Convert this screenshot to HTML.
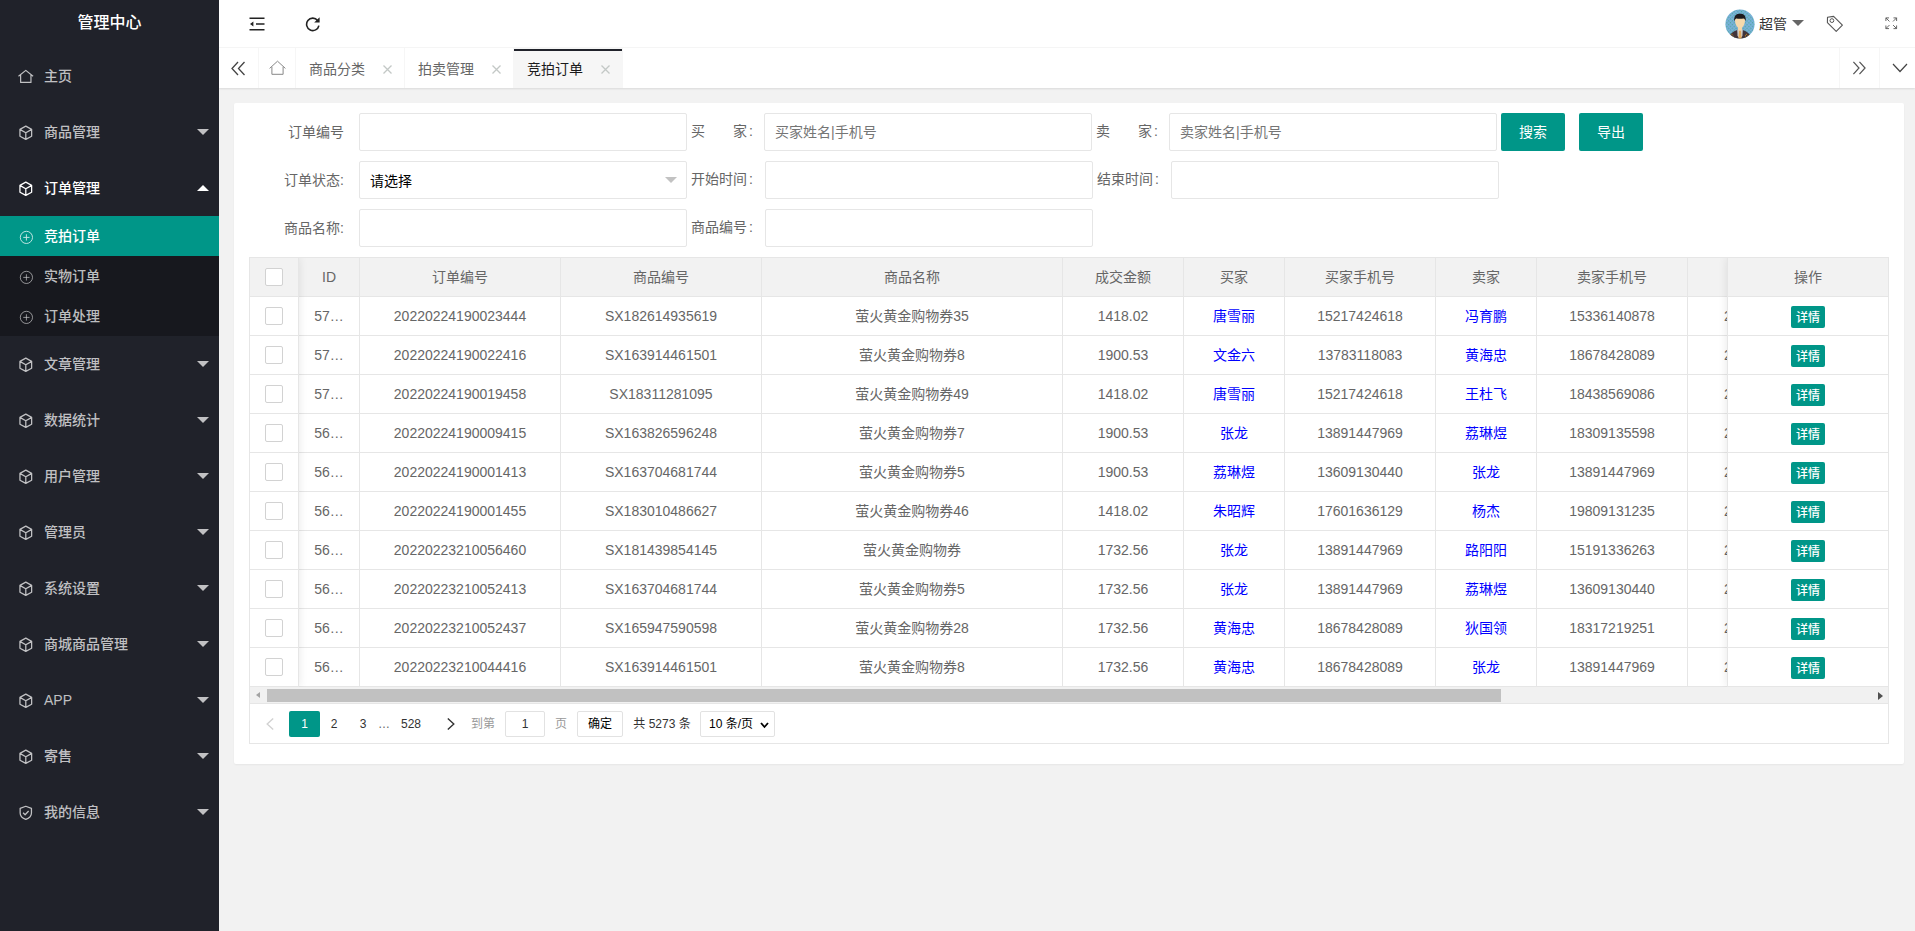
<!DOCTYPE html>
<html lang="zh-CN"><head><meta charset="utf-8"><title>管理中心</title>
<style>
*{box-sizing:border-box;margin:0;padding:0}
html,body{width:1915px;height:931px;overflow:hidden;background:#f2f2f2}
body{font-family:"Liberation Sans","Noto Sans CJK SC",sans-serif;font-size:14px;color:#666;position:relative;line-height:24px}
.abs{position:absolute}
#side{left:0;top:0;width:219px;height:931px;background:#20222a;font-weight:500}
#logo{left:0;top:0;width:219px;height:48px;line-height:45px;text-align:center;color:#fff;font-size:16px}
.mi{left:0;width:219px;height:56px;line-height:56px;color:rgba(255,255,255,.72);font-size:14px}
.mi.open{color:#fff}
.mi .ic{position:absolute;left:18px;top:21.2px;width:15.6px;height:15.6px}
.mi span{position:absolute;left:44px;top:0}
.mi i.down{position:absolute;left:197px;top:25px;border:6px solid transparent;border-top-color:rgba(255,255,255,.72);border-bottom-width:0}
.mi i.up{position:absolute;left:197px;top:25px;border:6px solid transparent;border-bottom-color:#fff;border-top-width:0}
#sub{left:0;top:216px;width:219px;height:120px;background:#17181e}
.si{left:0;width:219px;height:40px;line-height:40px;color:rgba(255,255,255,.72)}
.si.on{background:#009688;color:#fff}
.si .ic{position:absolute;left:18.8px;top:14px;width:14.8px;height:14.8px;opacity:.8}
.si span{position:absolute;left:44px;top:0}
#head{left:219px;top:0;width:1696px;height:48px;background:#fff;border-bottom:1px solid #f6f6f6}
#tabs{left:219px;top:48px;width:1696px;height:40px;background:#fff;box-shadow:0 1px 2px 0 rgba(0,0,0,.1)}
.tb{top:0;height:40px;line-height:40px;border-right:1px solid #f6f6f6;color:#666;font-size:14px}
.tb.r{border-right:0;border-left:1px solid #f6f6f6}
.tb .t{position:absolute;left:13px;top:1px;white-space:nowrap}
.tb.on{background:#f6f6f6;color:#1a1a1a}
.tb.on:before{content:"";position:absolute;left:0;top:1px;width:100%;height:2px;background:#20222a}
#card{left:234px;top:103px;width:1670px;height:661px;background:#fff;border-radius:2px;box-shadow:0 1px 2px 0 rgba(0,0,0,.05)}
.lab{height:38px;line-height:38px;color:#666;white-space:nowrap}
.lab.m{line-height:36px}
.lab b{font-weight:normal;margin-left:2px}
.inp{height:38px;border:1px solid #e6e6e6;border-radius:2px;background:#fff;line-height:36px;padding-left:10px;color:#757575}
.btn{height:38px;line-height:38px;background:#009688;color:#fff;text-align:center;border-radius:2px;font-size:14px}
#tbl{left:249px;top:257px;width:1640px;height:487px;border:1px solid #e6e6e6;background:#fff}
.hr{left:0;top:0;height:39px;background:#f2f2f2;border-bottom:1px solid #e6e6e6}
.c{position:absolute;top:0;height:100%;border-right:1px solid #e6e6e6;text-align:center;line-height:38px;white-space:nowrap;overflow:hidden}
.row{left:0;height:39px;border-bottom:1px solid #e6e6e6;background:#fff}
.row a{color:#0000ff;text-decoration:none}
.cb{position:absolute;left:16px;top:10px;width:18px;height:18px;border:1px solid #d2d2d2;border-radius:2px;background:#fff}
.dbtn{position:absolute;left:63px;top:9px;width:34px;height:22px;line-height:24px;font-weight:500;background:#009688;color:#fff;font-size:12px;border-radius:2px;text-align:center}
.pg{top:0;height:26px;line-height:26px;text-align:center;color:#333;font-size:12px}
</style></head><body>

<div id="side" class="abs">
<div id="logo" class="abs">管理中心</div>
<div class="mi abs" style="top:48px"><svg class="ic" viewBox="0 0 16 16"><path d="M0.5 7.4 L8 1.4 L15.5 7.4 M2.7 6 V13.8 H13.3 V6" fill="none" stroke="currentColor" stroke-width="1.2" stroke-linejoin="round"/></svg><span>主页</span></div>
<div class="mi abs" style="top:104px"><svg class="ic" viewBox="0 0 16 16"><path d="M8 1.2 L14 4.5 V11.5 L8 14.8 L2 11.5 V4.5 Z M2.3 4.7 L8 8 L13.7 4.7 M8 8 V14.5" fill="none" stroke="currentColor" stroke-width="1.3" stroke-linejoin="round"/></svg><span>商品管理</span><i class="down"></i></div>
<div class="mi abs open" style="top:160px"><svg class="ic" viewBox="0 0 16 16"><path d="M8 1.2 L14 4.5 V11.5 L8 14.8 L2 11.5 V4.5 Z M2.3 4.7 L8 8 L13.7 4.7 M8 8 V14.5" fill="none" stroke="currentColor" stroke-width="1.3" stroke-linejoin="round"/></svg><span>订单管理</span><i class="up"></i></div>
<div class="mi abs" style="top:336px"><svg class="ic" viewBox="0 0 16 16"><path d="M8 1.2 L14 4.5 V11.5 L8 14.8 L2 11.5 V4.5 Z M2.3 4.7 L8 8 L13.7 4.7 M8 8 V14.5" fill="none" stroke="currentColor" stroke-width="1.3" stroke-linejoin="round"/></svg><span>文章管理</span><i class="down"></i></div>
<div class="mi abs" style="top:392px"><svg class="ic" viewBox="0 0 16 16"><path d="M8 1.2 L14 4.5 V11.5 L8 14.8 L2 11.5 V4.5 Z M2.3 4.7 L8 8 L13.7 4.7 M8 8 V14.5" fill="none" stroke="currentColor" stroke-width="1.3" stroke-linejoin="round"/></svg><span>数据统计</span><i class="down"></i></div>
<div class="mi abs" style="top:448px"><svg class="ic" viewBox="0 0 16 16"><path d="M8 1.2 L14 4.5 V11.5 L8 14.8 L2 11.5 V4.5 Z M2.3 4.7 L8 8 L13.7 4.7 M8 8 V14.5" fill="none" stroke="currentColor" stroke-width="1.3" stroke-linejoin="round"/></svg><span>用户管理</span><i class="down"></i></div>
<div class="mi abs" style="top:504px"><svg class="ic" viewBox="0 0 16 16"><path d="M8 1.2 L14 4.5 V11.5 L8 14.8 L2 11.5 V4.5 Z M2.3 4.7 L8 8 L13.7 4.7 M8 8 V14.5" fill="none" stroke="currentColor" stroke-width="1.3" stroke-linejoin="round"/></svg><span>管理员</span><i class="down"></i></div>
<div class="mi abs" style="top:560px"><svg class="ic" viewBox="0 0 16 16"><path d="M8 1.2 L14 4.5 V11.5 L8 14.8 L2 11.5 V4.5 Z M2.3 4.7 L8 8 L13.7 4.7 M8 8 V14.5" fill="none" stroke="currentColor" stroke-width="1.3" stroke-linejoin="round"/></svg><span>系统设置</span><i class="down"></i></div>
<div class="mi abs" style="top:616px"><svg class="ic" viewBox="0 0 16 16"><path d="M8 1.2 L14 4.5 V11.5 L8 14.8 L2 11.5 V4.5 Z M2.3 4.7 L8 8 L13.7 4.7 M8 8 V14.5" fill="none" stroke="currentColor" stroke-width="1.3" stroke-linejoin="round"/></svg><span>商城商品管理</span><i class="down"></i></div>
<div class="mi abs" style="top:672px"><svg class="ic" viewBox="0 0 16 16"><path d="M8 1.2 L14 4.5 V11.5 L8 14.8 L2 11.5 V4.5 Z M2.3 4.7 L8 8 L13.7 4.7 M8 8 V14.5" fill="none" stroke="currentColor" stroke-width="1.3" stroke-linejoin="round"/></svg><span>APP</span><i class="down"></i></div>
<div class="mi abs" style="top:728px"><svg class="ic" viewBox="0 0 16 16"><path d="M8 1.2 L14 4.5 V11.5 L8 14.8 L2 11.5 V4.5 Z M2.3 4.7 L8 8 L13.7 4.7 M8 8 V14.5" fill="none" stroke="currentColor" stroke-width="1.3" stroke-linejoin="round"/></svg><span>寄售</span><i class="down"></i></div>
<div class="mi abs" style="top:784px"><svg class="ic" viewBox="0 0 16 16"><path d="M8 1.3 L13.8 3.4 V8.2 C13.8 11.4 11.4 13.6 8 14.8 C4.6 13.6 2.2 11.4 2.2 8.2 V3.4 Z M5.2 8 L7.3 10 L10.9 6.2" fill="none" stroke="currentColor" stroke-width="1.3" stroke-linejoin="round"/></svg><span>我的信息</span><i class="down"></i></div>
<div id="sub" class="abs">
<div class="si abs on" style="top:0px"><svg class="ic" viewBox="0 0 16 16"><circle cx="8" cy="8" r="6.6" fill="none" stroke="currentColor" stroke-width="1"/><path d="M8 4.6 V11.4 M4.6 8 H11.4" stroke="currentColor" stroke-width="1"/></svg><span>竞拍订单</span></div>
<div class="si abs" style="top:40px"><svg class="ic" viewBox="0 0 16 16"><circle cx="8" cy="8" r="6.6" fill="none" stroke="currentColor" stroke-width="1"/><path d="M8 4.6 V11.4 M4.6 8 H11.4" stroke="currentColor" stroke-width="1"/></svg><span>实物订单</span></div>
<div class="si abs" style="top:80px"><svg class="ic" viewBox="0 0 16 16"><circle cx="8" cy="8" r="6.6" fill="none" stroke="currentColor" stroke-width="1"/><path d="M8 4.6 V11.4 M4.6 8 H11.4" stroke="currentColor" stroke-width="1"/></svg><span>订单处理</span></div>
</div></div>
<div id="head" class="abs">
<svg class="abs" style="left:30px;top:16px" width="16" height="16" viewBox="0 0 16 16"><path d="M0.5 2.2 H15.5 M7 8 H15.5 M0.5 13.8 H15.5" stroke="#222" stroke-width="1.4" fill="none"/><path d="M1 8 L4.4 5.6 V10.4 Z" fill="#222"/></svg>
<svg class="abs" style="left:86px;top:15.5px" width="16" height="16" viewBox="0 0 16 16"><path d="M12.6 4.4 A6.2 6.2 0 1 0 13.9 9.6" stroke="#222" stroke-width="1.6" fill="none"/><path d="M14.6 1.2 V6.6 H9.2 Z" fill="#222"/></svg>
<svg class="abs" style="left:1506px;top:9.3px" width="30" height="30" viewBox="0 0 30 30"><defs><clipPath id="av"><circle cx="15" cy="15" r="14.6"/></clipPath><pattern id="dots" width="2.6" height="2.6" patternUnits="userSpaceOnUse" patternTransform="rotate(45)"><rect width="2.6" height="2.6" fill="#7aafdc"/><rect width="1.3" height="1.3" fill="#52ad9f"/></pattern></defs><g clip-path="url(#av)"><rect width="30" height="30" fill="url(#dots)"/><path d="M4 30 C4.5 24 9 22.5 12.5 20.8 L17.5 20.8 C21 22.5 25.5 24 26 30 Z" fill="#40343a"/><path d="M12.2 20.5 L17.8 20.5 L17.4 27 L15 30 L12.6 27 Z" fill="#cfd3d6"/><path d="M13.9 21.5 H16.1 L16.6 30 H13.4 Z" fill="#e2a85a"/><path d="M13 16 H17 V21.6 H13 Z" fill="#f3d6a8"/><path d="M10 11 C10 8.5 12 8 15 8 C18 8 20 8.5 20 11 C20 14.5 18.8 17.2 17.2 18.6 H12.8 C11.2 17.2 10 14.5 10 11 Z" fill="#f5d9ac"/><path d="M9.3 12.4 C8.6 6.5 11.5 4.8 15 4.8 C18.5 4.8 21.4 6.5 20.7 12.4 C20.2 10.6 19.6 9.6 18.6 9.4 C16 9.8 12.5 9.6 11.2 9.4 C10.3 9.8 9.8 10.8 9.3 12.4 Z" fill="#1d1a1e"/><circle cx="7" cy="25.2" r=".5" fill="#e89a1c"/><circle cx="8" cy="27" r=".5" fill="#e89a1c"/><circle cx="21.6" cy="25.3" r=".5" fill="#e89a1c"/><circle cx="20.4" cy="26.3" r=".5" fill="#e89a1c"/><circle cx="23.2" cy="26.4" r=".5" fill="#e89a1c"/><circle cx="20.6" cy="28" r=".5" fill="#e89a1c"/></g></svg>
<div class="abs" style="left:1540px;top:0;height:48px;line-height:48px;color:#333;font-size:14px">超管</div>
<i class="abs" style="left:1573px;top:20px;border:6px solid transparent;border-top:6px solid #666;border-bottom-width:0"></i>
<svg class="abs" style="left:1607px;top:15px" width="18" height="18" viewBox="0 0 18 18"><path d="M1.5 2.2 L7.6 1.4 L16.4 10.2 L10.2 16.4 L1.4 7.6 Z" fill="none" stroke="#555" stroke-width="1.1" stroke-linejoin="round" transform="rotate(0 9 9)"/><circle cx="5.9" cy="5.6" r="1.9" fill="none" stroke="#555" stroke-width="1"/></svg>
<svg class="abs" style="left:1666px;top:17px" width="12.5" height="12.5" viewBox="0 0 14 14"><path d="M1 4.5 V1 H4.5 M9.5 1 H13 V4.5 M13 9.5 V13 H9.5 M4.5 13 H1 V9.5 M1 1 L5 5 M13 1 L9 5 M13 13 L9 9 M1 13 L5 9" fill="none" stroke="#555" stroke-width="1"/></svg>
</div>
<div id="tabs" class="abs">
<div class="tb abs" style="left:0;width:40px"><svg class="abs" style="left:12px;top:13px" width="15" height="15" viewBox="0 0 15 15"><path d="M7 1 L1 7.5 L7 14 M13.5 1 L7.5 7.5 L13.5 14" fill="none" stroke="#444" stroke-width="1.3"/></svg></div>
<div class="tb abs" style="left:40px;width:37px"><svg class="abs" style="left:9.5px;top:12px" width="17" height="17" viewBox="0 0 17 17"><path d="M0.6 8.4 L8.5 1.2 L16.4 8.4 M2.9 6.8 V14.3 H14.1 V6.8" fill="none" stroke="#888" stroke-width="1" stroke-linejoin="round"/></svg></div>
<div class="tb abs" style="left:77px;width:109px"><span class="t">商品分类</span><svg class="abs" style="left:87px;top:17px" width="9" height="9" viewBox="0 0 9 9"><path d="M0.5 0.5 L8.5 8.5 M8.5 0.5 L0.5 8.5" stroke="#c3c8c6" stroke-width="1.3" fill="none"/></svg></div>
<div class="tb abs" style="left:186px;width:109px"><span class="t">拍卖管理</span><svg class="abs" style="left:87px;top:17px" width="9" height="9" viewBox="0 0 9 9"><path d="M0.5 0.5 L8.5 8.5 M8.5 0.5 L0.5 8.5" stroke="#c3c8c6" stroke-width="1.3" fill="none"/></svg></div>
<div class="tb abs on" style="left:295px;width:109px"><span class="t">竞拍订单</span><svg class="abs" style="left:87px;top:17px" width="9" height="9" viewBox="0 0 9 9"><path d="M0.5 0.5 L8.5 8.5 M8.5 0.5 L0.5 8.5" stroke="#c3c8c6" stroke-width="1.3" fill="none"/></svg></div>
<div class="tb r abs" style="left:1620px;width:40px"><svg class="abs" style="left:12px;top:13px" width="14" height="14" viewBox="0 0 15 15"><path d="M1.5 1 L7.5 7.5 L1.5 14 M8 1 L14 7.5 L8 14" fill="none" stroke="#555" stroke-width="1.3"/></svg></div>
<div class="tb r abs" style="left:1660px;width:36px"><svg class="abs" style="left:12px;top:15px" width="16" height="10" viewBox="0 0 16 10"><path d="M1 1 L8 8.5 L15 1" fill="none" stroke="#444" stroke-width="1.2"/></svg></div>
</div>
<div id="card" class="abs"></div>
<div class="lab abs" style="right:1571px;top:113px">订单编号</div>
<div class="inp abs" style="left:359px;top:113px;width:328px"></div>
<div class="lab abs m" style="right:1162px;top:113px">买&emsp;&emsp;家<b>:</b></div>
<div class="inp abs" style="left:764px;top:113px;width:328px">买家姓名|手机号</div>
<div class="lab abs m" style="right:757px;top:113px">卖&emsp;&emsp;家<b>:</b></div>
<div class="inp abs" style="left:1169px;top:113px;width:328px">卖家姓名|手机号</div>
<div class="btn abs" style="left:1501px;top:113px;width:64px">搜索</div>
<div class="btn abs" style="left:1579px;top:113px;width:64px">导出</div>
<div class="lab abs" style="right:1571px;top:161px">订单状态:</div>
<div class="inp abs" style="left:359px;top:161px;width:328px;color:#000;line-height:38px">请选择<i class="abs" style="right:9px;top:15px;border:6px solid transparent;border-top-color:#c2c2c2;border-bottom-width:0"></i></div>
<div class="lab abs m" style="right:1162px;top:161px">开始时间<b>:</b></div>
<div class="inp abs" style="left:765px;top:161px;width:328px"></div>
<div class="lab abs m" style="right:756px;top:161px">结束时间<b>:</b></div>
<div class="inp abs" style="left:1171px;top:161px;width:328px"></div>
<div class="lab abs" style="right:1571px;top:209px">商品名称:</div>
<div class="inp abs" style="left:359px;top:209px;width:328px"></div>
<div class="lab abs m" style="right:1162px;top:209px">商品编号<b>:</b></div>
<div class="inp abs" style="left:765px;top:209px;width:328px"></div>
<div id="tbl" class="abs">
<div class="hr abs" style="width:1638px"><div class="c" style="left:-1px;width:50px"><i class="cb"></i></div><div class="c" style="left:49px;width:61px">ID</div><div class="c" style="left:110px;width:201px">订单编号</div><div class="c" style="left:311px;width:201px">商品编号</div><div class="c" style="left:512px;width:301px">商品名称</div><div class="c" style="left:813px;width:121px">成交金额</div><div class="c" style="left:934px;width:101px">买家</div><div class="c" style="left:1035px;width:151px">买家手机号</div><div class="c" style="left:1186px;width:101px">卖家</div><div class="c" style="left:1287px;width:151px">卖家手机号</div><div class="c" style="left:1438px;width:200px;border-right:0;text-align:left;padding-left:36px"></div></div>
<div class="row abs" style="top:39px;width:1638px"><div class="c" style="left:-1px;width:50px"><i class="cb"></i></div><div class="c" style="left:49px;width:61px">57…</div><div class="c" style="left:110px;width:201px">20220224190023444</div><div class="c" style="left:311px;width:201px">SX182614935619</div><div class="c" style="left:512px;width:301px">萤火黄金购物券35</div><div class="c" style="left:813px;width:121px">1418.02</div><div class="c" style="left:934px;width:101px"><a>唐雪丽</a></div><div class="c" style="left:1035px;width:151px">15217424618</div><div class="c" style="left:1186px;width:101px"><a>冯育鹏</a></div><div class="c" style="left:1287px;width:151px">15336140878</div><div class="c" style="left:1438px;width:200px;border-right:0;text-align:left;padding-left:36px">2022-02-24 19:00:23</div></div>
<div class="row abs" style="top:78px;width:1638px"><div class="c" style="left:-1px;width:50px"><i class="cb"></i></div><div class="c" style="left:49px;width:61px">57…</div><div class="c" style="left:110px;width:201px">20220224190022416</div><div class="c" style="left:311px;width:201px">SX163914461501</div><div class="c" style="left:512px;width:301px">萤火黄金购物券8</div><div class="c" style="left:813px;width:121px">1900.53</div><div class="c" style="left:934px;width:101px"><a>文金六</a></div><div class="c" style="left:1035px;width:151px">13783118083</div><div class="c" style="left:1186px;width:101px"><a>黄海忠</a></div><div class="c" style="left:1287px;width:151px">18678428089</div><div class="c" style="left:1438px;width:200px;border-right:0;text-align:left;padding-left:36px">2022-02-24 19:00:23</div></div>
<div class="row abs" style="top:117px;width:1638px"><div class="c" style="left:-1px;width:50px"><i class="cb"></i></div><div class="c" style="left:49px;width:61px">57…</div><div class="c" style="left:110px;width:201px">20220224190019458</div><div class="c" style="left:311px;width:201px">SX18311281095</div><div class="c" style="left:512px;width:301px">萤火黄金购物券49</div><div class="c" style="left:813px;width:121px">1418.02</div><div class="c" style="left:934px;width:101px"><a>唐雪丽</a></div><div class="c" style="left:1035px;width:151px">15217424618</div><div class="c" style="left:1186px;width:101px"><a>王杜飞</a></div><div class="c" style="left:1287px;width:151px">18438569086</div><div class="c" style="left:1438px;width:200px;border-right:0;text-align:left;padding-left:36px">2022-02-24 19:00:23</div></div>
<div class="row abs" style="top:156px;width:1638px"><div class="c" style="left:-1px;width:50px"><i class="cb"></i></div><div class="c" style="left:49px;width:61px">56…</div><div class="c" style="left:110px;width:201px">20220224190009415</div><div class="c" style="left:311px;width:201px">SX163826596248</div><div class="c" style="left:512px;width:301px">萤火黄金购物券7</div><div class="c" style="left:813px;width:121px">1900.53</div><div class="c" style="left:934px;width:101px"><a>张龙</a></div><div class="c" style="left:1035px;width:151px">13891447969</div><div class="c" style="left:1186px;width:101px"><a>荔琳煜</a></div><div class="c" style="left:1287px;width:151px">18309135598</div><div class="c" style="left:1438px;width:200px;border-right:0;text-align:left;padding-left:36px">2022-02-24 19:00:23</div></div>
<div class="row abs" style="top:195px;width:1638px"><div class="c" style="left:-1px;width:50px"><i class="cb"></i></div><div class="c" style="left:49px;width:61px">56…</div><div class="c" style="left:110px;width:201px">20220224190001413</div><div class="c" style="left:311px;width:201px">SX163704681744</div><div class="c" style="left:512px;width:301px">萤火黄金购物券5</div><div class="c" style="left:813px;width:121px">1900.53</div><div class="c" style="left:934px;width:101px"><a>荔琳煜</a></div><div class="c" style="left:1035px;width:151px">13609130440</div><div class="c" style="left:1186px;width:101px"><a>张龙</a></div><div class="c" style="left:1287px;width:151px">13891447969</div><div class="c" style="left:1438px;width:200px;border-right:0;text-align:left;padding-left:36px">2022-02-24 19:00:23</div></div>
<div class="row abs" style="top:234px;width:1638px"><div class="c" style="left:-1px;width:50px"><i class="cb"></i></div><div class="c" style="left:49px;width:61px">56…</div><div class="c" style="left:110px;width:201px">20220224190001455</div><div class="c" style="left:311px;width:201px">SX183010486627</div><div class="c" style="left:512px;width:301px">萤火黄金购物券46</div><div class="c" style="left:813px;width:121px">1418.02</div><div class="c" style="left:934px;width:101px"><a>朱昭辉</a></div><div class="c" style="left:1035px;width:151px">17601636129</div><div class="c" style="left:1186px;width:101px"><a>杨杰</a></div><div class="c" style="left:1287px;width:151px">19809131235</div><div class="c" style="left:1438px;width:200px;border-right:0;text-align:left;padding-left:36px">2022-02-24 19:00:23</div></div>
<div class="row abs" style="top:273px;width:1638px"><div class="c" style="left:-1px;width:50px"><i class="cb"></i></div><div class="c" style="left:49px;width:61px">56…</div><div class="c" style="left:110px;width:201px">20220223210056460</div><div class="c" style="left:311px;width:201px">SX181439854145</div><div class="c" style="left:512px;width:301px">萤火黄金购物券</div><div class="c" style="left:813px;width:121px">1732.56</div><div class="c" style="left:934px;width:101px"><a>张龙</a></div><div class="c" style="left:1035px;width:151px">13891447969</div><div class="c" style="left:1186px;width:101px"><a>路阳阳</a></div><div class="c" style="left:1287px;width:151px">15191336263</div><div class="c" style="left:1438px;width:200px;border-right:0;text-align:left;padding-left:36px">2022-02-24 19:00:23</div></div>
<div class="row abs" style="top:312px;width:1638px"><div class="c" style="left:-1px;width:50px"><i class="cb"></i></div><div class="c" style="left:49px;width:61px">56…</div><div class="c" style="left:110px;width:201px">20220223210052413</div><div class="c" style="left:311px;width:201px">SX163704681744</div><div class="c" style="left:512px;width:301px">萤火黄金购物券5</div><div class="c" style="left:813px;width:121px">1732.56</div><div class="c" style="left:934px;width:101px"><a>张龙</a></div><div class="c" style="left:1035px;width:151px">13891447969</div><div class="c" style="left:1186px;width:101px"><a>荔琳煜</a></div><div class="c" style="left:1287px;width:151px">13609130440</div><div class="c" style="left:1438px;width:200px;border-right:0;text-align:left;padding-left:36px">2022-02-24 19:00:23</div></div>
<div class="row abs" style="top:351px;width:1638px"><div class="c" style="left:-1px;width:50px"><i class="cb"></i></div><div class="c" style="left:49px;width:61px">56…</div><div class="c" style="left:110px;width:201px">20220223210052437</div><div class="c" style="left:311px;width:201px">SX165947590598</div><div class="c" style="left:512px;width:301px">萤火黄金购物券28</div><div class="c" style="left:813px;width:121px">1732.56</div><div class="c" style="left:934px;width:101px"><a>黄海忠</a></div><div class="c" style="left:1035px;width:151px">18678428089</div><div class="c" style="left:1186px;width:101px"><a>狄国领</a></div><div class="c" style="left:1287px;width:151px">18317219251</div><div class="c" style="left:1438px;width:200px;border-right:0;text-align:left;padding-left:36px">2022-02-24 19:00:23</div></div>
<div class="row abs" style="top:390px;width:1638px"><div class="c" style="left:-1px;width:50px"><i class="cb"></i></div><div class="c" style="left:49px;width:61px">56…</div><div class="c" style="left:110px;width:201px">20220223210044416</div><div class="c" style="left:311px;width:201px">SX163914461501</div><div class="c" style="left:512px;width:301px">萤火黄金购物券8</div><div class="c" style="left:813px;width:121px">1732.56</div><div class="c" style="left:934px;width:101px"><a>黄海忠</a></div><div class="c" style="left:1035px;width:151px">18678428089</div><div class="c" style="left:1186px;width:101px"><a>张龙</a></div><div class="c" style="left:1287px;width:151px">13891447969</div><div class="c" style="left:1438px;width:200px;border-right:0;text-align:left;padding-left:36px">2022-02-24 19:00:23</div></div>
<div class="abs" style="left:0;top:0;width:49px;height:429px;box-shadow:1px 0 8px rgba(0,0,0,.08);clip-path:inset(0 -12px 0 0)"></div>
<div class="abs" style="left:1477px;top:0;width:161px;height:429px;background:#fff;border-left:1px solid #e6e6e6;box-shadow:-1px 0 8px rgba(0,0,0,.08);clip-path:inset(0 0 0 -12px)">
<div class="abs" style="left:0;top:0;width:160px;height:39px;background:#f2f2f2;border-bottom:1px solid #e6e6e6;text-align:center;line-height:38px">操作</div>
<div class="abs" style="left:0;top:39px;width:160px;height:39px;border-bottom:1px solid #e6e6e6"><span class="dbtn">详情</span></div>
<div class="abs" style="left:0;top:78px;width:160px;height:39px;border-bottom:1px solid #e6e6e6"><span class="dbtn">详情</span></div>
<div class="abs" style="left:0;top:117px;width:160px;height:39px;border-bottom:1px solid #e6e6e6"><span class="dbtn">详情</span></div>
<div class="abs" style="left:0;top:156px;width:160px;height:39px;border-bottom:1px solid #e6e6e6"><span class="dbtn">详情</span></div>
<div class="abs" style="left:0;top:195px;width:160px;height:39px;border-bottom:1px solid #e6e6e6"><span class="dbtn">详情</span></div>
<div class="abs" style="left:0;top:234px;width:160px;height:39px;border-bottom:1px solid #e6e6e6"><span class="dbtn">详情</span></div>
<div class="abs" style="left:0;top:273px;width:160px;height:39px;border-bottom:1px solid #e6e6e6"><span class="dbtn">详情</span></div>
<div class="abs" style="left:0;top:312px;width:160px;height:39px;border-bottom:1px solid #e6e6e6"><span class="dbtn">详情</span></div>
<div class="abs" style="left:0;top:351px;width:160px;height:39px;border-bottom:1px solid #e6e6e6"><span class="dbtn">详情</span></div>
<div class="abs" style="left:0;top:390px;width:160px;height:39px;border-bottom:1px solid #e6e6e6"><span class="dbtn">详情</span></div>
</div>
<div class="abs" style="left:0;top:429px;width:1638px;height:16px;background:#f1f1f1">
<i class="abs" style="left:6px;top:5px;border:3.5px solid transparent;border-right:4.5px solid #a3a3a3;border-left-width:0"></i>
<i class="abs" style="right:5px;top:4.5px;border:4px solid transparent;border-left:5px solid #505050;border-right-width:0"></i>
<div class="abs" style="left:17px;top:2px;width:1234px;height:13px;background:#c1c1c1"></div>
</div>
<div class="abs" style="left:0;top:445px;width:1638px;height:40px;border-top:1px solid #e6e6e6">
<svg class="abs" style="left:16px;top:14px" width="8" height="12" viewBox="0 0 8 12"><path d="M7.2 0.5 L1.2 6 L7.2 11.5" fill="none" stroke="#d2d2d2" stroke-width="1.4"/></svg><div class="pg abs" style="left:39px;top:7px;width:31px;background:#009688;color:#fff;border-radius:2px">1</div><div class="pg abs" style="left:70px;top:7px;width:28px">2</div><div class="pg abs" style="left:99px;top:7px;width:28px">3</div><div class="pg abs" style="left:125px;top:7px;width:18px;color:#666">…</div><div class="pg abs" style="left:143px;top:7px;width:36px">528</div><svg class="abs" style="left:197px;top:14px" width="8" height="12" viewBox="0 0 8 12"><path d="M0.8 0.5 L6.8 6 L0.8 11.5" fill="none" stroke="#333" stroke-width="1.4"/></svg><div class="pg abs" style="left:220px;top:7px;width:26px;color:#999">到第</div><div class="pg abs" style="left:255px;top:7px;width:40px;border:1px solid #e2e2e2;border-radius:2px;line-height:24px">1</div><div class="pg abs" style="left:304px;top:7px;width:14px;color:#999">页</div><div class="pg abs" style="left:327px;top:7px;width:46px;border:1px solid #e2e2e2;border-radius:2px;line-height:24px;color:#000">确定</div><div class="pg abs" style="left:383px;top:7px;width:58px;white-space:nowrap">共 5273 条</div><div class="pg abs" style="left:450px;top:7px;width:75px;border:1px solid #e2e2e2;border-radius:2px;line-height:24px;text-align:left;padding-left:8px;color:#000;white-space:nowrap">10 条/页<svg class="abs" style="left:59px;top:10px" width="9" height="7" viewBox="0 0 9 7"><path d="M1 1 L4.5 5 L8 1" fill="none" stroke="#000" stroke-width="1.8"/></svg></div>
</div>
</div>
</body></html>
